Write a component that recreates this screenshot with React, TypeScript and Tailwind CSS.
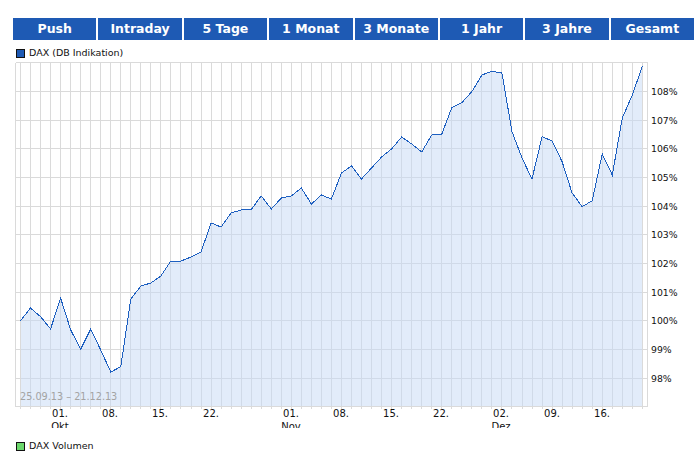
const tabs = ["Push", "Intraday", "5 Tage", "1 Monat", "3 Monate", "1 Jahr", "3 Jahre", "Gesamt"];
const ys = [320.7,308,316.7,329,298,330,349,329,350,372,366.7,299,286,283,276,261,261,257,252,223,227,213,210,209.5,196,209,198,196,188,204,195,199,173,166,179,168,157,149,137,144,152,135,134,107.7,102.7,91.7,75,71.3,73,131.7,158,179,136.7,141,161.7,193,206.7,200.7,154,175,118,95,66];
const xAt = (i: number) => 20.5 + i * 10.03;
const pts = ys.map((y, i) => `${xAt(i).toFixed(1)},${y}`).join(" ");
const hLines = [91, 120, 148, 177, 206, 234, 263, 292, 320, 349, 378];
const pct = [108, 107, 106, 105, 104, 103, 102, 101, 100, 99, 98];
const dates: [number, string, string?][] = [
  [60, "01.", "Okt"], [110, "08."], [160, "15."], [211, "22."],
  [291, "01.", "Nov"], [341, "08."], [391, "15."], [441, "22."],
  [501, "02.", "Dez"], [552, "09."], [602, "16."],
];
const font = { fontFamily: "'DejaVu Sans', sans-serif" };

function Legend({ color, label, className }: { color: string; label: string; className: string }) {
  return (
    <div className={`flex items-center gap-[4px] pl-[16px] h-[10px] text-[9.5px] text-[#111] font-['DejaVu_Sans',sans-serif] ${className}`}>
      <span className={`w-[9px] h-[9px] border border-[#111] ${color}`} />
      <span className="leading-[10px]">{label}</span>
    </div>
  );
}

export default function App() {
  return (
    <div className="w-[699px] h-[459px] bg-white overflow-hidden pt-[18px]">
      <div className="ml-[13px] w-[681px] grid grid-cols-8 gap-[2px]">
        {tabs.map((t) => (
          <div key={t} className="h-[22px] bg-[#1e5ab4] text-white font-bold text-[12.5px] leading-[22px] text-center font-['DejaVu_Sans',sans-serif]">
            {t}
          </div>
        ))}
      </div>
      <Legend color="bg-[#1e5ab4]" label="DAX (DB Indikation)" className="mt-[8px]" />
      <svg width="699" height="366" viewBox="0 62 699 366" className="block mt-[4px]" style={font}>
        <g stroke="#dadada" strokeWidth="1" shapeRendering="crispEdges">
          <line x1="15.5" y1="62.5" x2="647.5" y2="62.5" />
          <line x1="15.5" y1="406.5" x2="647.5" y2="406.5" />
          <line x1="15.5" y1="62.5" x2="15.5" y2="406.5" />
          <line x1="647.5" y1="62.5" x2="647.5" y2="406.5" />
          {hLines.map((y) => (
            <line key={y} x1="15.5" y1={y + 0.5} x2="647.5" y2={y + 0.5} />
          ))}
          {ys.map((_, i) => (
            <line key={i} x1={Math.floor(xAt(i)) + 0.5} y1="62.5" x2={Math.floor(xAt(i)) + 0.5} y2="408.5" />
          ))}
        </g>
        <polygon points={`20.5,406 ${pts} ${xAt(62).toFixed(1)},406`} fill="#c6d9f5" fillOpacity="0.5" shapeRendering="crispEdges" />
        <polyline points={pts} fill="none" stroke="#1d5fc0" strokeWidth="1" shapeRendering="crispEdges" />
        <text x="20" y="400" fontSize="9.7" fill="#a3a3a3">25.09.13 – 21.12.13</text>
        {hLines.map((y, i) => (
          <text key={y} x="651" y={y + 4} fontSize="9.3" fill="#111">{pct[i]}%</text>
        ))}
        {dates.map(([x, d, m]) => (
          <g key={x} fontSize="10" fill="#111" textAnchor="middle">
            <text x={x} y="417">{d}</text>
            {m && <text x={x} y="430">{m}</text>}
          </g>
        ))}
      </svg>
      <Legend color="bg-[#6cd86c]" label="DAX Volumen" className="mt-[13px]" />
    </div>
  );
}
